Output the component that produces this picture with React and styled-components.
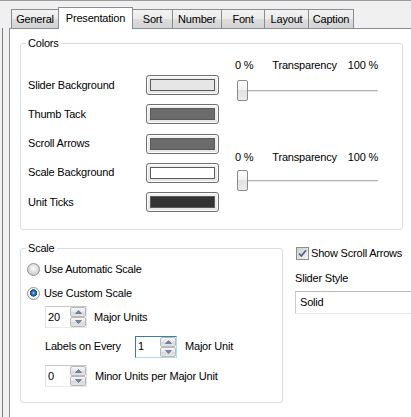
import React from 'react';
import styled, { createGlobalStyle } from 'styled-components';

const GlobalStyle = createGlobalStyle`
  body {
    margin: 0;
    font-family: "Liberation Sans", Arial, sans-serif;
    font-size: 11px;
    letter-spacing: -0.2px;
    color: #000;
  }
`;

const Window = styled.div`
  width: 411px;
  height: 417px;
  overflow: hidden;
  box-sizing: border-box;
  background: #f0f0f0;
  border-top: 1px solid #9c9c9c;
  display: flex;
  flex-direction: column;
`;

const TabStrip = styled.div`
  height: 27px;
  flex-shrink: 0;
  display: flex;
  align-items: flex-end;
  padding-left: 11px;
  position: relative;
  z-index: 1;
`;

const Tab = styled.div`
  box-sizing: border-box;
  width: ${p => p.$w}px;
  height: ${p => (p.$active ? 22 : 19)}px;
  margin-bottom: ${p => (p.$active ? -1 : 0)}px;
  padding-top: ${p => (p.$active ? 0 : 1)}px;
  border: 1px solid #898c95;
  border-bottom: none;
  background: ${p =>
    p.$active
      ? '#fff'
      : 'linear-gradient(#f3f3f3, #ebebeb 50%, #dddddd 50%, #d3d3d3)'};
  display: flex;
  align-items: center;
  justify-content: center;
  line-height: 13px;
  position: relative;
  z-index: ${p => (p.$active ? 2 : 1)};
  & + & {
    margin-left: -1px;
  }
`;

const Body = styled.div`
  flex: 1;
  display: flex;
  min-height: 0;
`;

const Gutter = styled.div`
  width: 6px;
  margin-left: 2px;
  border-left: 1px solid #7d7d7d;
  flex-shrink: 0;
`;

const Pane = styled.div`
  flex: 1;
  min-width: 0;
  box-sizing: border-box;
  background: #fff;
  border-top: 1px solid #898c95;
  border-left: 1px solid #898c95;
  padding: 14px 0 0 10px;
`;

const Group = styled.div`
  position: relative;
  box-sizing: border-box;
  width: ${p => p.$w}px;
  border: 1px solid #d5dfe5;
  border-radius: 3px;
  padding: ${p => p.$pad};
  margin-top: ${p => p.$top || 0}px;
  flex-shrink: 0;
`;

const GroupCaption = styled.span`
  position: absolute;
  top: -7px;
  left: 5px;
  padding: 0 2px;
  background: #fff;
  line-height: 13px;
`;

const ColorsBody = styled.div`
  display: flex;
  align-items: flex-start;
`;

const ColorList = styled.div`
  display: flex;
  flex-direction: column;
  gap: 9.3px;
  margin-top: 31px;
`;

const ColorRow = styled.div`
  display: flex;
  align-items: center;
  height: 20px;
`;

const ColorLabel = styled.span`
  width: 118px;
  line-height: 13px;
`;

const SwatchButton = styled.div`
  box-sizing: border-box;
  width: 73px;
  height: 20px;
  padding: 3px;
  border: 1px solid #707070;
  border-radius: 3px;
  background: linear-gradient(#f2f2f2, #e6e6e6);
  box-shadow: inset 0 0 0 1px #fcfcfc;
`;

const Swatch = styled.div`
  height: 100%;
  box-sizing: border-box;
  border: 1px solid #5a5a5a;
  background: ${p => p.$color};
`;

const SliderColumn = styled.div`
  width: 143px;
  margin-left: 16px;
  margin-top: 14.5px;
`;

const SliderBlock = styled.div`
  margin-top: ${p => p.$top || 0}px;
`;

const ScaleLabels = styled.div`
  display: flex;
  line-height: 13px;
  span:nth-child(2) {
    margin-left: 19px;
  }
  span:last-child {
    margin-left: auto;
  }
`;

const Slider = styled.div`
  position: relative;
  height: 21px;
  margin-top: ${p => p.$gap}px;
  display: flex;
  align-items: center;
  &::before {
    content: '';
    position: absolute;
    left: 2px;
    right: 0;
    top: 10px;
    height: 1px;
    background: #b4b4b4;
    border-bottom: 1px solid #e7eaea;
  }
`;

const Thumb = styled.div`
  position: relative;
  box-sizing: border-box;
  width: 11px;
  height: 21px;
  margin-left: 2px;
  border: 1px solid #8a8a8a;
  border-radius: 2px;
  background: linear-gradient(#fdfdfd, #f2f2f2 50%, #e2e2e2 50%, #ececec);
`;

const LowerRow = styled.div`
  display: flex;
  align-items: flex-start;
  margin-top: 16.5px;
`;

const RadioRow = styled.label`
  display: flex;
  align-items: center;
  gap: 4px;
  height: 13px;
  line-height: 13px;
  margin-top: ${p => p.$top || 0}px;
`;

const Radio = styled.span`
  box-sizing: border-box;
  width: 13px;
  height: 13px;
  border-radius: 50%;
  border: 1px solid #8e8f8f;
  background: ${p =>
    p.$checked
      ? 'radial-gradient(circle at 50% 45%, #a8e0fa 0, #2f8fd6 1.2px, #1b5f9e 2.6px, #12426f 3.4px, #ffffff 3.9px, #f2f2f2 5.5px)'
      : 'radial-gradient(circle at 50% 40%, #ffffff 0, #e6e6e6 3px, #cfcfcf 6px)'};
`;

const SpinRow = styled.div`
  display: flex;
  align-items: center;
  height: 22px;
  margin-left: 18px;
  margin-top: ${p => p.$top}px;
`;

const RowLabel = styled.span`
  line-height: 13px;
  width: ${p => (p.$w ? `${p.$w}px` : 'auto')};
  margin-left: ${p => p.$gap || 0}px;
`;

const SpinBox = styled.div`
  box-sizing: border-box;
  width: 42px;
  height: 22px;
  display: flex;
  background: #fff;
  border: 1px solid;
  border-color: ${p =>
    p.$focus
      ? '#3d7bad #b7d9ed #b7d9ed #3d7bad'
      : '#c3c6cc #e2e3ea #e3e9ef #e2e3ea'};
`;

const SpinValue = styled.span`
  flex: 1;
  display: flex;
  align-items: center;
  padding-left: 2px;
  line-height: 13px;
`;

const SpinButtons = styled.div`
  width: 16px;
  display: flex;
  flex-direction: column;
`;

const SpinButton = styled.div`
  flex: 1;
  box-sizing: border-box;
  border: 1px solid #b9b9b9;
  border-radius: 2px;
  background: linear-gradient(#f7f7f7, #e6e6e6 50%, #d9d9d9 50%, #e4e4e4);
  display: flex;
  align-items: center;
  justify-content: center;
`;

const RightPanel = styled.div`
  width: 130px;
  flex-shrink: 0;
  margin-left: 12px;
`;

const CheckRow = styled.label`
  display: flex;
  align-items: center;
  gap: 2px;
  height: 13px;
  line-height: 13px;
`;

const CheckBox = styled.span`
  box-sizing: border-box;
  width: 13px;
  height: 13px;
  margin-left: 1px;
  border: 1px solid #8e8f8f;
  background: linear-gradient(135deg, #cfcfcf, #f4f4f4);
  display: flex;
  align-items: center;
  justify-content: center;
`;

const FieldLabel = styled.div`
  line-height: 13px;
  margin-top: 12px;
`;

const ComboBox = styled.div`
  box-sizing: border-box;
  height: 23px;
  margin-top: 6.5px;
  padding-left: 4px;
  display: flex;
  align-items: center;
  background: #fff;
  border: 1px solid;
  border-color: #b6b8bd #e2e3ea #e3e9ef #c8cacf;
  line-height: 13px;
`;

const Arrow = ({ up }) => (
  <svg width="7" height="4" viewBox="0 0 7 4">
    <path
      d={up ? 'M0.5 3.5 L3.5 0.5 L6.5 3.5 Z' : 'M0.5 0.5 L3.5 3.5 L6.5 0.5 Z'}
      fill="#6f86ad"
      stroke="#4d6185"
      strokeWidth="0.6"
    />
  </svg>
);

const Spinner = ({ value, focus }) => (
  <SpinBox $focus={focus}>
    <SpinValue>{value}</SpinValue>
    <SpinButtons>
      <SpinButton><Arrow up /></SpinButton>
      <SpinButton><Arrow /></SpinButton>
    </SpinButtons>
  </SpinBox>
);

const tabs = [
  { name: 'General', w: 48 },
  { name: 'Presentation', w: 75, active: true },
  { name: 'Sort', w: 41 },
  { name: 'Number', w: 50 },
  { name: 'Font', w: 44 },
  { name: 'Layout', w: 45 },
  { name: 'Caption', w: 46 },
];

const colors = [
  { label: 'Slider Background', color: '#e6e6e6' },
  { label: 'Thumb Tack', color: '#6b6b6b' },
  { label: 'Scroll Arrows', color: '#6b6b6b' },
  { label: 'Scale Background', color: '#ffffff' },
  { label: 'Unit Ticks', color: '#333333' },
];

const TransparencySlider = ({ top, gap }) => (
  <SliderBlock $top={top}>
    <ScaleLabels>
      <span>0 %</span>
      <span>Transparency</span>
      <span>100 %</span>
    </ScaleLabels>
    <Slider $gap={gap}>
      <Thumb />
    </Slider>
  </SliderBlock>
);

export default function App() {
  return (
    <>
      <GlobalStyle />
      <Window>
        <TabStrip>
          {tabs.map(t => (
            <Tab key={t.name} $w={t.w} $active={t.active}>
              {t.name}
            </Tab>
          ))}
        </TabStrip>
        <Body>
          <Gutter />
          <Pane>
            <Group $w={383} $pad="0 0 17px 7px">
              <GroupCaption>Colors</GroupCaption>
              <ColorsBody>
                <ColorList>
                  {colors.map(c => (
                    <ColorRow key={c.label}>
                      <ColorLabel>{c.label}</ColorLabel>
                      <SwatchButton>
                        <Swatch $color={c.color} />
                      </SwatchButton>
                    </ColorRow>
                  ))}
                </ColorList>
                <SliderColumn>
                  <TransparencySlider gap={8.5} />
                  <TransparencySlider top={49.5} gap={6.5} />
                </SliderColumn>
              </ColorsBody>
            </Group>

            <LowerRow>
              <Group $w={263} $top={1.5} $pad="13.5px 0 14.5px 6px">
                <GroupCaption>Scale</GroupCaption>
                <RadioRow>
                  <Radio />
                  Use Automatic Scale
                </RadioRow>
                <RadioRow $top={11}>
                  <Radio $checked />
                  Use Custom Scale
                </RadioRow>
                <SpinRow $top={6.5}>
                  <Spinner value="20" />
                  <RowLabel $gap={7}>Major Units</RowLabel>
                </SpinRow>
                <SpinRow $top={7.5}>
                  <RowLabel $w={90}>Labels on Every</RowLabel>
                  <Spinner value="1" focus />
                  <RowLabel $gap={8}>Major Unit</RowLabel>
                </SpinRow>
                <SpinRow $top={7.5}>
                  <Spinner value="0" />
                  <RowLabel $gap={8}>Minor Units per Major Unit</RowLabel>
                </SpinRow>
              </Group>

              <RightPanel>
                <CheckRow>
                  <CheckBox>
                    <svg width="9" height="9" viewBox="0 0 9 9">
                      <path
                        d="M1 4.5 L3.3 7 L8 1.2"
                        fill="none"
                        stroke="#4f5f8e"
                        strokeWidth="1.7"
                      />
                    </svg>
                  </CheckBox>
                  Show Scroll Arrows
                </CheckRow>
                <FieldLabel>Slider Style</FieldLabel>
                <ComboBox>Solid</ComboBox>
              </RightPanel>
            </LowerRow>
          </Pane>
        </Body>
      </Window>
    </>
  );
}
